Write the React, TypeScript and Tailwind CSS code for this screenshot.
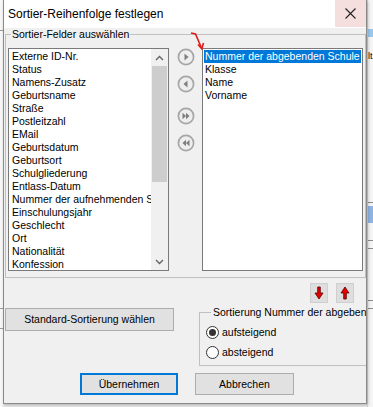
import React from "react";

const leftItems = [
  "Externe ID-Nr.",
  "Status",
  "Namens-Zusatz",
  "Geburtsname",
  "Straße",
  "Postleitzahl",
  "EMail",
  "Geburtsdatum",
  "Geburtsort",
  "Schulgliederung",
  "Entlass-Datum",
  "Nummer der aufnehmenden Schule",
  "Einschulungsjahr",
  "Geschlecht",
  "Ort",
  "Nationalität",
  "Konfession",
];

const rightItems = ["Nummer der abgebenden Schule", "Klasse", "Name", "Vorname"];

function RoundBtn({ kind }: { kind: "r" | "l" | "rr" | "ll" }) {
  return (
    <svg width="18" height="18" viewBox="0 0 18 18">
      <circle cx="9" cy="9" r="7.6" fill="#eeeeee" stroke="#a6a6a6" strokeWidth="1.7" />
      {kind === "r" && <polygon points="7.5,5.5 11.5,9 7.5,12.5" fill="#7e7e7e" />}
      {kind === "l" && <polygon points="10.5,5.5 6.5,9 10.5,12.5" fill="#7e7e7e" />}
      {kind === "rr" && (
        <>
          <polygon points="5.5,5.8 9,9 5.5,12.2" fill="#7e7e7e" />
          <polygon points="9,5.8 12.5,9 9,12.2" fill="#7e7e7e" />
        </>
      )}
      {kind === "ll" && (
        <>
          <polygon points="12.5,5.8 9,9 12.5,12.2" fill="#7e7e7e" />
          <polygon points="9,5.8 5.5,9 9,12.2" fill="#7e7e7e" />
        </>
      )}
    </svg>
  );
}

function ArrowBtn({ up }: { up?: boolean }) {
  return (
    <div className="w-[18px] h-[20px] bg-[#dedede] border border-[#cfcfcf] flex items-center justify-center">
      <svg width="10" height="14" viewBox="0 0 10 14">
        <polygon
          points={up ? "5,1 9,7 6.3,7 6.3,13 3.7,13 3.7,7 1,7" : "5,13 9,7 6.3,7 6.3,1 3.7,1 3.7,7 1,7"}
          fill="#e60000"
          stroke="#5a0000"
          strokeWidth="0.8"
        />
      </svg>
    </div>
  );
}

function Radio({ checked, label }: { checked?: boolean; label: string }) {
  return (
    <div className="h-[20px] flex items-center">
      <div className="w-[13px] h-[13px] rounded-full border border-[#333] bg-white flex items-center justify-center">
        {checked && <div className="w-[7px] h-[7px] rounded-full bg-[#333]" />}
      </div>
      <span className="ml-[3px]">{label}</span>
    </div>
  );
}

export default function App() {
  return (
    <div className="w-[373px] h-[407px] flex bg-[#e9e9e9] overflow-hidden text-black font-['Liberation_Sans',Arial,sans-serif] text-[10.5px] leading-[13px]">
      {/* background app, left edge */}
      <div className="w-[3px] flex flex-col bg-[#f7f7f7]">
        <div className="h-[30px]" />
        <div className="h-px bg-[#9a9a9a]" />
        <div className="h-[277px]" />
        <div className="h-px bg-[#9a9a9a]" />
        <div className="h-[19px]" />
        <div className="h-px bg-[#9a9a9a]" />
      </div>

      {/* dialog */}
      <div className="w-[364px] h-[404px] flex flex-col border-x border-b border-[#8a8a8a] bg-[#f0f0f0] overflow-hidden relative shadow-[1px_1px_3px_rgba(0,0,0,0.25)]">
        <div className="h-[28px] bg-white flex items-start justify-between">
          <span className="pl-[4px] text-[12px] leading-[28px]">Sortier-Reihenfolge festlegen</span>
          <div className="w-[31px] h-[27px] bg-[#f5dede] flex items-center justify-center">
            <svg width="11" height="11" viewBox="0 0 11 11">
              <path d="M0.5 0.5 L10.5 10.5 M10.5 0.5 L0.5 10.5" stroke="#222" strokeWidth="1.1" />
            </svg>
          </div>
        </div>

        <fieldset className="ml-[1px] w-[361px] border border-[#c0c0c0] px-[2px] pt-[7px] pb-[6px]">
          <legend className="ml-[3px] px-[1px]">Sortier-Felder auswählen</legend>
          <div className="flex">
            {/* left list */}
            <div className="w-[161px] h-[223px] border border-[#7a7a7a] bg-white flex">
              <div className="flex-1 min-w-0 pt-[1px] pl-[3px] overflow-hidden">
                {leftItems.map((t) => (
                  <div key={t} className="h-[13px] whitespace-nowrap overflow-hidden">
                    {t}
                  </div>
                ))}
              </div>
              <div className="w-[17px] flex flex-col bg-[#f0f0f0]">
                <div className="h-[17px] flex items-center justify-center">
                  <svg width="9" height="6" viewBox="0 0 9 6">
                    <path d="M1 5 L4.5 1.5 L8 5" fill="none" stroke="#606060" strokeWidth="1.3" />
                  </svg>
                </div>
                <div className="mx-[1px] h-[116px] bg-[#cdcdcd]" />
                <div className="flex-1" />
                <div className="h-[17px] flex items-center justify-center">
                  <svg width="9" height="6" viewBox="0 0 9 6">
                    <path d="M1 1 L4.5 4.5 L8 1" fill="none" stroke="#606060" strokeWidth="1.3" />
                  </svg>
                </div>
              </div>
            </div>

            {/* move buttons */}
            <div className="w-[33px] flex flex-col items-center">
              <RoundBtn kind="r" />
              <div className="h-[9px]" />
              <RoundBtn kind="l" />
              <div className="h-[14px]" />
              <RoundBtn kind="rr" />
              <div className="h-[9px]" />
              <RoundBtn kind="ll" />
            </div>

            {/* right list */}
            <div className="w-[161px] h-[223px] border border-[#7a7a7a] bg-white pt-[1px] px-[1px] overflow-hidden">
              {rightItems.map((t, i) => (
                <div
                  key={t}
                  className={
                    i === 0
                      ? "h-[13px] pl-[1px] whitespace-nowrap overflow-hidden bg-[#0078d7] text-white"
                      : "h-[13px] pl-[1px] whitespace-nowrap overflow-hidden"
                  }
                >
                  {t}
                </div>
              ))}
            </div>
          </div>
        </fieldset>

        {/* up/down */}
        <div className="mt-[5px] flex justify-end gap-[8px] pr-[12px]">
          <ArrowBtn />
          <ArrowBtn up />
        </div>

        <div className="flex items-start">
          <div className="ml-[1px] mt-[5px] w-[169px] h-[23px] shrink-0 whitespace-nowrap bg-[#e1e1e1] border border-[#adadad] flex items-center justify-center">
            Standard-Sortierung wählen
          </div>
          <fieldset className="ml-[25px] mt-[3px] w-[180px] shrink-0 border border-[#c0c0c0] pl-[6px] pt-[3px] pb-[3px]">
            <legend className="ml-[5px] px-[2px] whitespace-nowrap">Sortierung Nummer der abgebenden Schule</legend>
            <Radio checked label="aufsteigend" />
            <Radio label="absteigend" />
          </fieldset>
        </div>

        <div className="mt-[7px] flex">
          <div className="ml-[76px] w-[98px] h-[22px] bg-[#e1e1e1] border-2 border-[#0078d7] flex items-center justify-center">
            Übernehmen
          </div>
          <div className="ml-[17px] w-[99px] h-[22px] bg-[#e1e1e1] border border-[#adadad] flex items-center justify-center">
            Abbrechen
          </div>
        </div>

        {/* annotation arrow */}
        <svg className="absolute left-[186px] top-[31px]" width="16" height="19" viewBox="0 0 16 19">
          <path d="M1 2 L5.5 3 L11.5 17" fill="none" stroke="#e01b1b" strokeWidth="1.6" />
          <path d="M8 13.5 L11.8 17.8 L13.5 12" fill="none" stroke="#e01b1b" strokeWidth="1.6" />
        </svg>
      </div>

      {/* background app, right edge */}
      <div className="w-[6px] flex flex-col bg-[#f5f5f5] border-l border-[#d6d6d6]">
        <div className="h-[29px]" />
        <div className="h-[8px] bg-[#9cc8ee]" />
        <div className="h-[14px]" />
        <div className="h-[10px] text-[9px] leading-[10px] overflow-hidden whitespace-nowrap">lt</div>
        <div className="h-[141px]" />
        <div className="h-px bg-[#8a8a8a]" />
        <div className="h-[3px]" />
        <div className="h-[17px] bg-[#8fb4e3]" />
        <div className="h-[17px]" />
        <div className="h-px bg-[#8a8a8a]" />
        <div className="h-[7px]" />
        <div className="h-px bg-[#8a8a8a]" />
        <div className="h-[51px]" />
        <div className="h-px bg-[#8a8a8a]" />
        <div className="h-[7px]" />
        <div className="h-px bg-[#8a8a8a]" />
      </div>
    </div>
  );
}
